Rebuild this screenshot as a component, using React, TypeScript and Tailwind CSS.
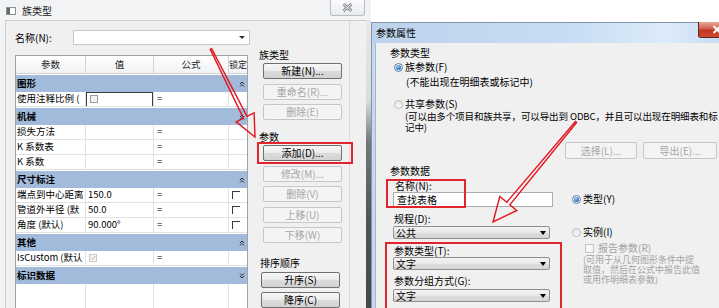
import React from "react";

function Btn({ label, disabled, w = "w-[79px]", ml = "ml-[7px]" }: { label: string; disabled?: boolean; w?: string; ml?: string }) {
  return (
    <div
      className={
        "h-[16px] flex items-center justify-center rounded-[2px] border text-[10px] leading-none shrink-0 " +
        w +
        " " +
        ml +
        (disabled
          ? " border-[#c3c7ca] bg-[#f4f4f4] text-[#a6a6a6]"
          : " border-[#707070] bg-[linear-gradient(to_bottom,#f7f7f7,#ebebeb_50%,#dcdcdc_51%,#d2d2d2)] text-black")
      }
    >
      {label}
    </div>
  );
}

function Radio({ on }: { on?: boolean }) {
  return (
    <span
      className={
        "w-[9px] h-[9px] rounded-full border flex items-center justify-center shrink-0 " +
        (on ? "border-[#5d7ea3] bg-[#eef4fb]" : "border-[#b9bcc0] bg-[linear-gradient(to_bottom,#e6e6e6,#fafafa)]")
      }
    >
      {on && <span className="w-[5px] h-[5px] rounded-full bg-[radial-gradient(circle_at_40%_35%,#a9d3fb,#2a6fc0_60%,#164a8c)]" />}
    </span>
  );
}

function Combo({ text }: { text: string }) {
  return (
    <div className="h-[13px] w-[157px] border border-[#8e8f8f] rounded-[2px] bg-[linear-gradient(to_bottom,#f4f4f4,#e8e8e8_50%,#dddddd_51%,#d6d6d6)] flex items-center pl-[2px] text-[10px] leading-none">
      <span>{text}</span>
      <span className="ml-auto mr-[3px] w-0 h-0 border-l-[3px] border-r-[3px] border-t-[4px] border-l-transparent border-r-transparent border-t-black" />
    </div>
  );
}

function Chev({ up }: { up?: boolean }) {
  return (
    <svg width="6" height="6" viewBox="0 0 6 6" className="ml-auto mr-[2px]">
      {up ? (
        <path d="M1 3 L3 1 L5 3 M1 5.5 L3 3.5 L5 5.5" stroke="#2a2a2a" strokeWidth="1" fill="none" />
      ) : (
        <path d="M1 0.5 L3 2.5 L5 0.5 M1 3 L3 5 L5 3" stroke="#2a2a2a" strokeWidth="1" fill="none" />
      )}
    </svg>
  );
}

function GroupRow({ label, up = true }: { label: string; up?: boolean }) {
  return (
    <div className="h-[18px] border-t border-white bg-[#a3bbdb] flex items-center pl-[1px] font-bold text-[9.5px] leading-none">
      <span>{label}</span>
      <Chev up={up} />
    </div>
  );
}

function Cell({ w, children, last }: { w: string; children?: React.ReactNode; last?: boolean }) {
  return (
    <div className={"h-full flex items-center overflow-hidden whitespace-nowrap shrink-0 " + w + (last ? "" : " border-r border-[#e2e2e2]")}>
      {children}
    </div>
  );
}

function LockBox() {
  return <span className="ml-[3px] w-[8px] h-[8px] border-l border-t border-[#3a3a3a]" />;
}

function DataRow({ name, val, lock, valNode }: { name: string; val?: string; lock?: boolean; valNode?: React.ReactNode }) {
  return (
    <div className="h-[15px] flex border-b border-[#e2e2e2] bg-white text-[9.5px] leading-none">
      <Cell w="w-[70px]">
        <span className="pl-[1px]">{name}</span>
      </Cell>
      <Cell w="w-[68px]">{valNode ?? <span className="pl-[2px]">{val}</span>}</Cell>
      <Cell w="w-[75px]">
        <span className="pl-[3px] text-[#555]">=</span>
      </Cell>
      <Cell w="w-[18px]" last>
        {lock && <LockBox />}
      </Cell>
    </div>
  );
}

function LeftWindow() {
  return (
    <div className="absolute left-0 top-0 w-[371px] h-[308px] flex flex-col bg-[#f1f3f5]">
      <div className="h-[20px] flex items-start shrink-0">
        <div className="ml-[6px] mt-[7px] w-[10px] h-[8px] border border-[#8c9196] bg-white flex">
          <span className="w-[3px] h-full bg-[#5c6d5f]" />
        </div>
        <span className="ml-[6px] mt-[5px] text-[10px] leading-[12px] text-[#222]">族类型</span>
        <div className="ml-auto mr-[6px] w-[35px] h-[16px] border border-t-0 border-[#b8bec6] rounded-b-[3px] bg-[linear-gradient(to_bottom,#fbfbfc,#e9ecef)] flex items-center justify-center">
          <svg width="11" height="9" viewBox="0 0 11 9">
            <path d="M1.5 1 L9.5 8 M9.5 1 L1.5 8" stroke="#8b9097" strokeWidth="3" />
            <path d="M1.5 1 L9.5 8 M9.5 1 L1.5 8" stroke="#f7f7f7" strokeWidth="1" />
          </svg>
        </div>
      </div>
      <div className="flex flex-1 min-h-0">
        <div className="ml-[5px] w-[361px] border-l border-t border-[#c9cdd2] bg-[#f0f0f0] flex overflow-hidden">
          {/* left column */}
          <div className="pl-[9px] w-[244px] shrink-0 flex flex-col">
            <div className="mt-[9px] h-[15px] flex items-center">
              <span className="w-[58px] text-[10px] leading-none">名称(N):</span>
              <div className="w-[177px] h-[15px] border border-[#c6c9cc] bg-white flex items-center">
                <span className="ml-auto mr-[4px] w-0 h-0 border-l-[3px] border-r-[3px] border-t-[3px] border-l-transparent border-r-transparent border-t-[#333]" />
              </div>
            </div>
            <div className="mt-[10px] w-[233px] border border-[#9ea3a8] bg-white">
              <div className="h-[18px] flex border-b border-[#d3d3d3] bg-[linear-gradient(to_bottom,#ffffff,#f1f2f4)] text-[9.5px] leading-none text-[#222]">
                <div className="w-[70px] border-r border-[#d3d3d3] flex items-center justify-center">参数</div>
                <div className="w-[68px] border-r border-[#d3d3d3] flex items-center justify-center">值</div>
                <div className="w-[75px] border-r border-[#d3d3d3] flex items-center justify-center">公式</div>
                <div className="w-[18px] flex items-center justify-center overflow-hidden whitespace-nowrap text-[9px]">锁定</div>
              </div>
              <GroupRow label="图形" />
              <DataRow
                name="使用注释比例 ("
                valNode={
                  <div className="w-[68px] h-[15px] border border-[#3c3c3c] flex items-center">
                    <span className="ml-[3px] w-[8px] h-[8px] border border-[#9a9a9a] bg-[#f4f4f4]" />
                  </div>
                }
              />
              <GroupRow label="机械" />
              <DataRow name="损失方法" />
              <DataRow name="K 系数表" />
              <DataRow name="K 系数" />
              <GroupRow label="尺寸标注" />
              <DataRow name="端点到中心距离" val="150.0" lock />
              <DataRow name="管道外半径 (默" val="50.0" lock />
              <DataRow name="角度 (默认)" val="90.000°" lock />
              <GroupRow label="其他" />
              <DataRow
                name="IsCustom (默认"
                valNode={
                  <span className="ml-[3px] w-[8px] h-[8px] border border-[#c8c8c8] bg-[#f6f6f6] flex items-center justify-center">
                    <svg width="6" height="6" viewBox="0 0 6 6">
                      <path d="M0.8 3 L2.4 4.6 L5.3 1" stroke="#b5b5b5" strokeWidth="1" fill="none" />
                    </svg>
                  </span>
                }
              />
              <GroupRow label="标识数据" up={false} />
              <div className="h-[30px] flex bg-white">
                <Cell w="w-[70px]" />
                <Cell w="w-[68px]" />
                <Cell w="w-[75px]" />
                <Cell w="w-[18px]" last />
              </div>
            </div>
          </div>
          {/* right column */}
          <div className="ml-[6px] w-[94px] shrink-0 flex flex-col border-r border-[#dadada] text-[10px] leading-[12px]">
            <span className="mt-[28px] pl-[3px] h-[12px]">族类型</span>
            <div className="mt-[2px]"><Btn label="新建(N)..." /></div>
            <div className="mt-[5px]"><Btn label="重命名(R)..." disabled /></div>
            <div className="mt-[4px]"><Btn label="删除(E)" disabled /></div>
            <span className="mt-[11px] pl-[3px] h-[12px]">参数</span>
            <div className="mt-[2px]"><Btn label="添加(D)..." /></div>
            <div className="mt-[5px]"><Btn label="修改(M)..." disabled /></div>
            <div className="mt-[4px]"><Btn label="删除(V)" disabled /></div>
            <div className="mt-[5px]"><Btn label="上移(U)" disabled /></div>
            <div className="mt-[4px]"><Btn label="下移(W)" disabled /></div>
            <span className="mt-[14px] pl-[4px] h-[12px]">排序顺序</span>
            <div className="mt-[3px]"><Btn label="升序(S)" ml="ml-[5px]" /></div>
            <div className="mt-[4px]"><Btn label="降序(C)" ml="ml-[5px]" /></div>
          </div>
        </div>
        <div className="w-[5px] shrink-0 bg-[linear-gradient(to_bottom,#e6e8eb_0%,#d9dcdf_28%,#74787e_42%,#50545a_70%,#44484d_100%)]" />
      </div>
    </div>
  );
}

function RightWindow() {
  return (
    <div className="absolute left-[371px] top-[22px] w-[360px] h-[286px] flex flex-col">
      <div className="h-[21px] shrink-0 flex items-start border-t border-l border-[#8296ab] bg-[linear-gradient(to_right,#bcd3ec,#c8ddf3_55%,#dcebfa_82%,#c3d9f1)]">
        <span className="ml-[4px] mt-[4px] text-[10px] leading-[12px] text-black">参数属性</span>
        <div className="ml-[327px] absolute left-0 top-0 w-[38px] h-[16px] border border-t-0 border-[#6b2118] rounded-b-[3px] bg-[linear-gradient(to_bottom,#e9a897,#d0604c_45%,#c1351f_55%,#cc4b33)] flex items-center justify-center">
          <svg width="10" height="9" viewBox="0 0 10 9">
            <path d="M1.5 1 L8.5 8 M8.5 1 L1.5 8" stroke="#ffffff" strokeWidth="2" />
          </svg>
        </div>
      </div>
      <div className="flex flex-1 min-h-0">
        <div className="w-[4px] shrink-0 border-l border-[#8296ab] bg-[#c6d9ee]" />
        <div className="flex-1 border-l border-[#aab6c3] bg-[#f0f0f0] flex flex-col text-[10px] leading-[12px] text-black">
          <span className="mt-[4px] ml-[14px] h-[12px]">参数类型</span>
          <div className="mt-[2px] ml-[18px] h-[12px] flex items-center">
            <Radio on />
            <span className="ml-[2px]">族参数(F)</span>
          </div>
          <span className="mt-[3px] ml-[30px] h-[12px]">(不能出现在明细表或标记中)</span>
          <div className="mt-[10px] ml-[18px] h-[12px] flex items-center">
            <Radio />
            <span className="ml-[2px]">共享参数(S)</span>
          </div>
          <div className="mt-[1px] ml-[29px] text-[9.5px] leading-[10.5px] whitespace-nowrap tracking-[-0.1px]">
            <div>(可以由多个项目和族共享，可以导出到 ODBC，并且可以出现在明细表和标</div>
            <div>记中)</div>
          </div>
          <div className="mt-[10px] flex">
            <Btn label="选择(L)..." disabled w="w-[72px] h-[17px]" ml="ml-[189px]" />
            <Btn label="导出(E)..." disabled w="w-[74px] h-[17px]" ml="ml-[6px]" />
          </div>
          <span className="mt-[6px] ml-[14px] h-[12px]">参数数据</span>
          <div className="flex">
            <div className="ml-[17px] w-[160px] flex flex-col">
              <span className="mt-[3px] pl-[2px] h-[12px]">名称(N):</span>
              <div className="h-[15px] w-[160px] border border-[#abadb3] bg-white flex items-center pl-[3px] leading-none">查找表格</div>
              <span className="mt-[6px] pl-[1px] h-[12px]">规程(D):</span>
              <div className="mt-[1px]"><Combo text="公共" /></div>
              <span className="mt-[6px] pl-[1px] h-[12px]">参数类型(T):</span>
              <div><Combo text="文字" /></div>
              <span className="mt-[5px] pl-[1px] h-[12px]">参数分组方式(G):</span>
              <div className="mt-[2px]"><Combo text="文字" /></div>
            </div>
            <div className="ml-[19px] flex flex-col">
              <div className="mt-[16px] h-[12px] flex items-center">
                <Radio on />
                <span className="ml-[2px]">类型(Y)</span>
              </div>
              <div className="mt-[21px] h-[12px] flex items-center">
                <Radio />
                <span className="ml-[2px]">实例(I)</span>
              </div>
              <div className="mt-[4px] h-[12px] flex items-center">
                <span className="ml-[13px] w-[9px] h-[9px] border border-[#c3c6c9] bg-[#f7f7f7]" />
                <span className="ml-[4px] text-[#a3a3a3]">报告参数(R)</span>
              </div>
              <div className="mt-[1px] ml-[11px] text-[9px] leading-[10px] text-[#a3a3a3] whitespace-nowrap">
                <div>(可用于从几何图形条件中提</div>
                <div>取值，然后在公式中报告此值</div>
                <div>或用作明细表参数)</div>
              </div>
            </div>
          </div>
        </div>
      </div>
    </div>
  );
}

export default function App() {
  return (
    <div className="relative w-[719px] h-[308px] overflow-hidden bg-white font-['Noto_Sans_CJK_SC','Noto_Sans',sans-serif] text-black">
      <LeftWindow />
      <RightWindow />
      {/* annotation red boxes */}
      <div className="absolute left-[257px] top-[142px] w-[96px] h-[22px] border-2 border-[#e0262c]" />
      <div className="absolute left-[386px] top-[179px] w-[80px] h-[29px] border-2 border-[#e0262c]" />
      <div className="absolute left-[385px] top-[242px] w-[177px] h-[80px] border-2 border-[#e0262c]" />
      <svg className="absolute left-0 top-0 pointer-events-none" width="719" height="308" viewBox="0 0 719 308">
        <polygon
          points="210.3,49.4 243.4,118.2 236.2,121.8 255,137 254.1,112.9 247,116.4 211.7,48.6"
          fill="none"
          stroke="#e3141c"
          strokeWidth="1.4"
          strokeLinejoin="miter"
        />
        <polygon
          points="576.6,122.5 509.8,204.8 516.8,210.5 493,222 499.8,196.5 506.8,202.2 575.4,121.5"
          fill="none"
          stroke="#e3141c"
          strokeWidth="1.4"
          strokeLinejoin="miter"
        />
      </svg>
    </div>
  );
}
